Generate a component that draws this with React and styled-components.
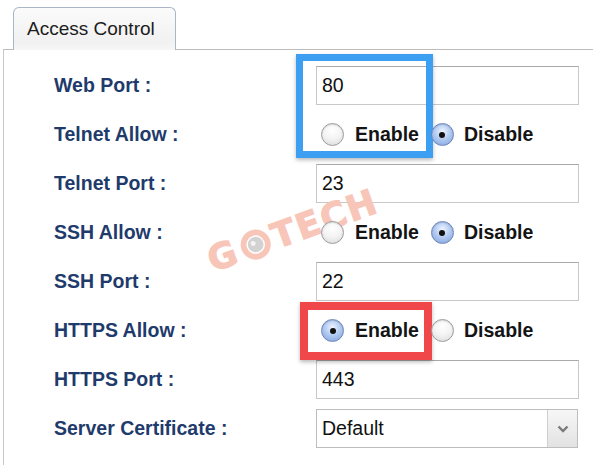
import React from "react";
import styled, { createGlobalStyle } from "styled-components";

const Global = createGlobalStyle`
  html, body { margin: 0; padding: 0; background: #fff; }
  body { font-family: "Liberation Sans", Arial, sans-serif; }
`;

const Page = styled.div`
  position: relative;
  width: 600px;
  height: 465px;
  overflow: hidden;
  background: #fff;
`;

const TabStrip = styled.div`
  display: flex;
  padding: 7px 0 0 13px;
`;

const Tab = styled.div`
  position: relative;
  z-index: 1;
  box-sizing: border-box;
  width: 163px;
  height: 43px;
  margin-bottom: -1px;
  display: flex;
  align-items: center;
  padding: 0 0 1px 13px;
  border: 1px solid #aab6c8;
  border-bottom: none;
  border-radius: 6px 6px 0 0;
  background: linear-gradient(#fbfbfb, #f1f1f1 80%, #f6f6f6);
  font-size: 19px;
  color: #1c1c1c;
`;

const Panel = styled.div`
  box-sizing: border-box;
  margin-left: 3px;
  width: 590px;
  height: 430px;
  border-top: 1px solid #bcbcbc;
  border-left: 1px solid #c9c9c9;
  padding: 11px 0 0 50px;
`;

const Form = styled.div`
  display: grid;
  grid-template-columns: 262px 263px;
  grid-auto-rows: 49px;
  align-items: center;
`;

const Label = styled.div`
  font-size: 19.5px;
  font-weight: bold;
  color: #1f3b6c;
  white-space: nowrap;
`;

const TextInput = styled.input`
  box-sizing: border-box;
  width: 263px;
  height: 39px;
  margin: 0;
  padding: 0 5px;
  border: 1px solid #c8c8c8;
  border-top-color: #a9a9a9;
  border-radius: 0;
  font-family: "Liberation Sans", Arial, sans-serif;
  font-size: 19.5px;
  color: #111;
  background: #fff;
  outline: none;
`;

const RadioGroup = styled.div`
  display: flex;
  align-items: center;
  padding-left: 5px;
`;

const RadioCircle = styled.span`
  position: relative;
  z-index: 2;
  box-sizing: border-box;
  width: 23px;
  height: 23px;
  border-radius: 50%;
  flex: none;
  border: 1px solid ${(p) => (p.$on ? "#6c84ba" : "#9c9c9c")};
  background: ${(p) =>
    p.$on
      ? "radial-gradient(circle at 50% 35%, #eef4ff 0%, #b4ccf2 45%, #7c9edc 100%)"
      : "radial-gradient(circle at 50% 30%, #ffffff 0%, #f3f3f3 50%, #d6d6d6 100%)"};
  box-shadow: inset 0 1px 1px rgba(0, 0, 0, 0.12);

  &::after {
    content: "";
    display: ${(p) => (p.$on ? "block" : "none")};
    position: absolute;
    left: 50%;
    top: 50%;
    width: 6px;
    height: 6px;
    margin: -3px 0 0 -3px;
    border-radius: 50%;
    background: #111;
  }
`;

const RadioText = styled.span`
  font-size: 19.5px;
  font-weight: bold;
  color: #141414;
  margin: 0 ${(p) => p.$after}px 0 ${(p) => p.$before}px;
`;

const Select = styled.div`
  box-sizing: border-box;
  width: 262px;
  height: 39px;
  display: flex;
  border: 1px solid #bdbdbd;
  background: #fff;
`;

const SelectValue = styled.div`
  flex: 1;
  display: flex;
  align-items: center;
  padding-left: 5px;
  font-size: 19.5px;
  color: #111;
`;

const SelectButton = styled.div`
  width: 29px;
  display: flex;
  align-items: center;
  justify-content: center;
  border-left: 1px solid #cfcfcf;
  background: linear-gradient(#f7f7f7, #e2e2e2);
`;

const Annotation = styled.div`
  position: absolute;
  box-sizing: border-box;
  left: ${(p) => p.$x}px;
  top: ${(p) => p.$y}px;
  width: ${(p) => p.$w}px;
  height: ${(p) => p.$h}px;
  border: ${(p) => p.$t}px solid ${(p) => p.$c};
  box-shadow: 0 2px 4px rgba(0, 0, 0, 0.28);
  pointer-events: none;
`;

const Watermark = styled.div`
  position: absolute;
  z-index: 1;
  left: 209px;
  top: 241px;
  display: flex;
  align-items: center;
  gap: 2px;
  transform: rotate(-20deg);
  transform-origin: left center;
  font-family: "DejaVu Sans", "Liberation Sans", sans-serif;
  font-size: 35px;
  font-weight: bold;
  letter-spacing: 2px;
  color: #f8c6b8;
  -webkit-text-stroke: 1.2px #f8c6b8;
  pointer-events: none;
`;

function Radio({ value }) {
  return (
    <RadioGroup>
      <RadioCircle $on={value} />
      <RadioText $before={11} $after={12}>Enable</RadioText>
      <RadioCircle $on={!value} />
      <RadioText $before={10} $after={0}>Disable</RadioText>
    </RadioGroup>
  );
}

const Chevron = () => (
  <svg width="12" height="8" viewBox="0 0 12 8">
    <polyline points="1.5,1.5 6,6 10.5,1.5" fill="none" stroke="#7a7a7a" strokeWidth="2.4" />
  </svg>
);

const Lens = () => (
  <svg width="33" height="33" viewBox="0 0 34 34">
    <circle cx="17" cy="17" r="15.5" fill="#f8c6b8" />
    <circle cx="17" cy="17" r="9.5" fill="#fff" />
    <circle cx="17" cy="17" r="8" fill="#d2d2d2" />
    <circle cx="15" cy="15" r="2.5" fill="#f3f3f3" />
  </svg>
);

const rows = [
  { label: "Web Port :", kind: "text", value: "80" },
  { label: "Telnet Allow :", kind: "radio", value: false },
  { label: "Telnet Port :", kind: "text", value: "23" },
  { label: "SSH Allow :", kind: "radio", value: false },
  { label: "SSH Port :", kind: "text", value: "22" },
  { label: "HTTPS Allow :", kind: "radio", value: true },
  { label: "HTTPS Port :", kind: "text", value: "443" },
  { label: "Server Certificate :", kind: "select", value: "Default" },
];

export default function App() {
  return (
    <Page>
      <Global />
      <TabStrip>
        <Tab>Access Control</Tab>
      </TabStrip>
      <Panel>
        <Form>
          {rows.map((r) => (
            <React.Fragment key={r.label}>
              <Label>{r.label}</Label>
              {r.kind === "text" && <TextInput readOnly value={r.value} />}
              {r.kind === "radio" && <Radio value={r.value} />}
              {r.kind === "select" && (
                <Select>
                  <SelectValue>{r.value}</SelectValue>
                  <SelectButton>
                    <Chevron />
                  </SelectButton>
                </Select>
              )}
            </React.Fragment>
          ))}
        </Form>
      </Panel>
      <Watermark>
        <span>G</span>
        <Lens />
        <span>TECH</span>
      </Watermark>
      <Annotation $x={296} $y={54} $w={137} $h={104} $t={7} $c="#3d9ff2" />
      <Annotation $x={300} $y={302} $w={132} $h={58} $t={8} $c="#f0474b" />
    </Page>
  );
}
